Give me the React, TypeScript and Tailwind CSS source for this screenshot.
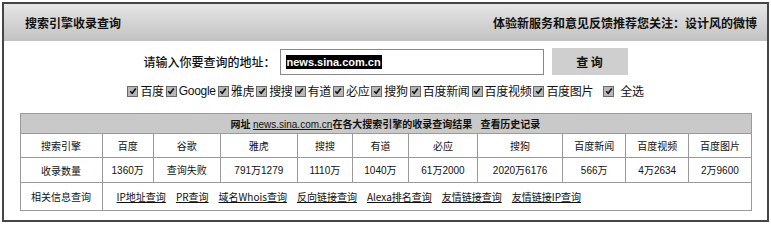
import React from 'react';

const engines = ['百度', 'Google', '雅虎', '搜搜', '有道', '必应', '搜狗', '百度新闻', '百度视频', '百度图片'];

const columns = [
  { name: '百度', count: '1360万', w: 'w-[51px]' },
  { name: '谷歌', count: '查询失败', w: 'w-[67px]' },
  { name: '雅虎', count: '791万1279', w: 'w-[77px]' },
  { name: '搜搜', count: '1110万', w: 'w-[55px]' },
  { name: '有道', count: '1040万', w: 'w-[56px]' },
  { name: '必应', count: '61万2000', w: 'w-[69px]' },
  { name: '搜狗', count: '2020万6176', w: 'w-[85px]' },
  { name: '百度新闻', count: '566万', w: 'w-[63px]' },
  { name: '百度视频', count: '4万2634', w: 'w-[63px]' },
  { name: '百度图片', count: '2万9600', w: 'w-[62px]' },
];

const links = ['IP地址查询', 'PR查询', '域名Whois查询', '反向链接查询', 'Alexa排名查询', '友情链接查询', '友情链接IP查询'];

const Check: React.FC = () => (
  <span className="inline-flex items-center justify-center w-[11px] h-[11px] bg-[#b8b8b8] border border-[#6a6a6a]">
    <svg width="8" height="8" viewBox="0 0 8 8">
      <path d="M1.2 4.2 L3.2 6.2 L6.8 1.6" stroke="#111" strokeWidth="1.6" fill="none" />
    </svg>
  </span>
);

const cell = 'border border-[#9a9a9a] text-center font-normal';

const App: React.FC = () => {
  return (
    <div className="w-[771px] h-[226px] bg-white p-[2px] text-[#111] font-['Noto_Sans_CJK_SC',sans-serif]">
      <div className="h-[220px] border-2 border-[#454545] flex flex-col">
        <div className="h-[37px] bg-gradient-to-b from-[#e6e6e6] to-[#c2c2c2] flex items-center justify-between pl-[21px] pr-[10px] text-[12px] font-bold">
          <span>搜索引擎收录查询</span>
          <span>体验新服务和意见反馈推荐您关注：设计风的微博</span>
        </div>

        <div className="flex items-center justify-center mt-[7px] text-[12px]">
          <span className="font-medium mr-[4px]">请输入你要查询的地址：</span>
          <div className="w-[264px] h-[26px] border border-[#888] flex items-center px-[5px]">
            <span className="bg-black text-white font-bold text-[11px] leading-[14px] px-[1px] font-['Liberation_Sans',sans-serif]">news.sina.com.cn</span>
          </div>
          <button className="ml-[8px] w-[76px] h-[27px] bg-[#cfcfcf] font-bold text-[12px]">查 询</button>
        </div>

        <div className="flex items-center justify-center mt-[8px] text-[12px] leading-[16px] tracking-[-0.3px]">
          {engines.map((e) => (
            <span key={e} className="flex items-center mr-[2px]">
              <Check />
              <span className={e === 'Google' ? "ml-[2px] font-['Liberation_Sans',sans-serif]" : 'ml-[2px]'}>{e}</span>
            </span>
          ))}
          <span className="flex items-center ml-[8px]">
            <Check />
            <span className="ml-[6px]">全选</span>
          </span>
        </div>

        <div className="flex justify-center mt-[14px]">
          <table className="border-collapse w-[732px] text-[10px] table-fixed">
            <colgroup>
              <col className="w-[82px]" />
              {columns.map((c) => (
                <col key={c.name} className={c.w} />
              ))}
            </colgroup>
            <tbody>
              <tr className="h-[20px] bg-[#c9c9c9]">
                <td colSpan={11} className="border border-[#9a9a9a] text-center font-bold">
                  网址 <span className="underline font-normal font-['Liberation_Sans',sans-serif]">news.sina.com.cn</span>在各大搜索引擎的收录查询结果
                  <span className="ml-[8px]">查看历史记录</span>
                </td>
              </tr>
              <tr className="h-[24px]">
                <td className={`${cell} font-bold`}>搜索引擎</td>
                {columns.map((c) => (
                  <td key={c.name} className={cell}>{c.name}</td>
                ))}
              </tr>
              <tr className="h-[25px]">
                <td className={`${cell} font-bold`}>收录数量</td>
                {columns.map((c) => (
                  <td key={c.name} className={`${cell} font-['Liberation_Sans','Noto_Sans_CJK_SC',sans-serif]`}>{c.count}</td>
                ))}
              </tr>
              <tr className="h-[28px]">
                <td className={`${cell} font-bold`}>相关信息查询</td>
                <td colSpan={10} className="border border-[#9a9a9a] pl-[14px]">
                  {links.map((l) => (
                    <span key={l} className="underline mr-[10px]">{l}</span>
                  ))}
                </td>
              </tr>
            </tbody>
          </table>
        </div>
      </div>
    </div>
  );
};

export default App;
